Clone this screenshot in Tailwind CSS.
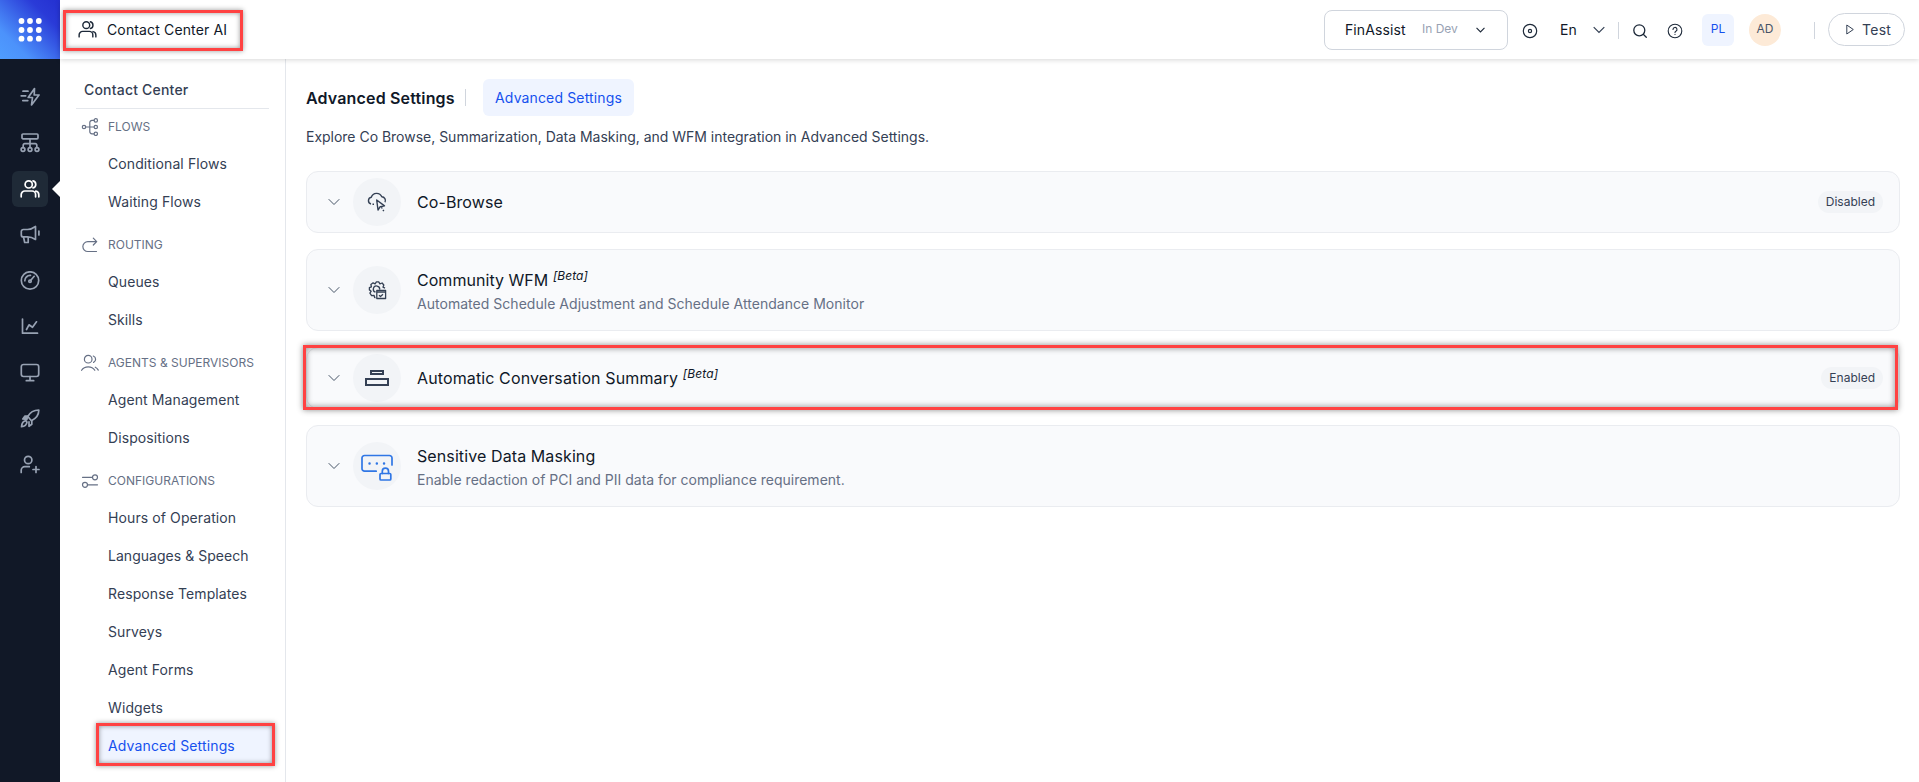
<!DOCTYPE html>
<html lang="en">
<head>
<meta charset="utf-8">
<title>Contact Center AI</title>
<script src="https://cdn.jsdelivr.net/npm/@tailwindcss/browser@4"></script>
</head>
<body class="relative h-[782px] w-[1919px] overflow-hidden bg-white font-['Inter',sans-serif] text-sm text-[#101828]">
<svg class="hidden">
  <symbol id="users" viewBox="0 0 20 20"><circle cx="8.7" cy="5.4" r="3.6"/><path d="M1.2 17.8v-2.2a3.6 3.6 0 0 1 3.6-3.6h7.2a3.6 3.6 0 0 1 3.6 3.6v2.2M13 1.9a3.6 3.6 0 0 1 0 7M15.8 12.2a3.6 3.6 0 0 1 3 3.5v2.1"/></symbol>
  <symbol id="down" viewBox="0 0 12 8"><path d="M.7 1.2 6 6.500l5.300-5.300"/></symbol>
</svg>
<div class="flex h-full">
  <aside class="flex w-[60px] shrink-0 flex-col bg-[#111827]">
    <div class="flex h-[59px] items-center justify-center bg-[linear-gradient(45deg,#4f9dff_0%,#4c92fb_25%,#2a3bd8_75%,#2430d0_100%)]">
      <svg class="size-6 fill-white" viewBox="0 0 24 24"><circle cx="3.5" cy="3" r="2.9"/><circle cx="12" cy="3" r="2.9"/><circle cx="20.8" cy="3" r="2.9"/><circle cx="3.5" cy="12" r="2.9"/><circle cx="12" cy="12" r="2.9"/><circle cx="20.8" cy="12" r="2.9"/><circle cx="3.5" cy="20.7" r="2.9"/><circle cx="12" cy="20.7" r="2.9"/><circle cx="20.8" cy="20.7" r="2.9"/></svg>
    </div>
    <nav class="mt-5 flex flex-col items-center gap-2.5 text-[#98a2b3] [&_svg]:size-5 [&_svg]:fill-none [&_svg]:stroke-current [&_svg]:stroke-[1.7] [&_svg]:[stroke-linecap:round] [&_svg]:[stroke-linejoin:round]">
      <a class="flex size-9 items-center justify-center"><svg viewBox="0 0 20 20"><path d="M14.500 1.500 8.200 10.500h4.300l-1 7.500 7.500-10h-4.800zM3 4.200h5M1.200 8.800h4.500M2.800 13.600h5"/></svg></a>
      <a class="flex size-9 items-center justify-center"><svg viewBox="0 0 20 20"><rect x="2" y="1" width="16" height="4.800" rx="1"/><path d="M10 5.800V14.500M3.200 14.500v-2.300a1.500 1.500 0 0 1 1.500-1.500h10.600a1.500 1.500 0 0 1 1.500 1.500V14.500"/><circle cx="3" cy="16.500" r="1.900"/><circle cx="10" cy="16.500" r="1.900"/><circle cx="17" cy="16.500" r="1.900"/></svg></a>
      <a class="relative flex size-9 items-center justify-center rounded-md bg-[#1f2a37] text-white"><svg><use href="#users"/></svg><i class="absolute -right-3 top-[10px] h-4 w-2 bg-white [clip-path:polygon(0_50%,100%_0,100%_100%)]"></i></a>
      <a class="flex size-9 items-center justify-center"><svg viewBox="0 0 20 20"><path d="M1.300 6.500a2 2 0 0 1 2-2h4.200c2.500 0 5.500-1.200 8-3v13c-2.500-1.600-5-2.600-8-2.600H3.300a2 2 0 0 1-2-2zM3.500 12l1.200 5.500h3.500V12M18.900 6v4"/></svg></a>
      <a class="flex size-9 items-center justify-center"><svg viewBox="0 0 20 20"><circle cx="10" cy="9.500" r="8.700"/><circle cx="10" cy="10.300" r="1.200"/><path d="m10.800 9.300 3.400-4M4.800 9.800A5.300 5.300 0 0 1 10.500 4.400M7 5.500l.1.100"/></svg></a>
      <a class="flex size-9 items-center justify-center"><svg viewBox="0 0 20 20"><path d="M2.500 2v14.200h15M6.500 12.500 9 7.800l3.500 2.500 4-5.500"/></svg></a>
      <a class="flex size-9 items-center justify-center"><svg viewBox="0 0 20 20"><rect x="1.300" y="1.500" width="17.400" height="12" rx="2.200"/><path d="M10 13.500v4M6.300 17.700h7.400"/></svg></a>
      <a class="flex size-9 items-center justify-center"><svg viewBox="0 0 20 20"><path d="M18.800 1c-5 0-8.500 1.800-11 6.500l3.600 4.200c4.700-2.200 7.400-5.700 7.400-10.700z"/><path class="fill-current" d="M7.800 7H5L2.800 10l4 .5z"/><path d="M11.800 11.700v3.600l-2.800 2v-4.500M6 11.700c-3 .5-4.200 2.500-4.500 6 3-.3 5-1.500 5.500-4.500z"/></svg></a>
      <a class="flex size-9 items-center justify-center"><svg viewBox="0 0 20 20"><circle cx="8.200" cy="5" r="3.700"/><path d="M1.200 17.500v-2.200a3.600 3.600 0 0 1 3.600-3.600h4.500M16 11.500v6M13 14.500h6"/></svg></a>
    </nav>
  </aside>

  <div class="flex flex-1 flex-col">
    <header class="z-10 flex h-[59px] shrink-0 items-center justify-between bg-white shadow-[0_1px_5px_rgba(0,0,0,0.16)]">
      <div class="ml-[3px] mt-[2px] flex h-[41px] w-[180px] items-center border-[3px] border-[#ff4242] pb-[2px] pl-3 shadow-[0_0_5px_rgba(0,0,0,0.4),inset_0_0_5px_rgba(0,0,0,0.4)]">
        <svg class="mr-[10px] size-[19px] fill-none stroke-[#1d2939] stroke-[1.500] [stroke-linecap:round]"><use href="#users"/></svg>
        <span class="tracking-[0.010em]">Contact Center AI</span>
      </div>
      <div class="flex items-center pr-[14px]">
        <div class="flex h-10 w-[184px] items-center rounded-lg border border-[#d0d5dd] pl-5">
          <span class="w-[77px] tracking-[0.1px]">FinAssist</span><span class="mb-[2px] w-[54px] text-xs text-[#98a2b3]">In Dev</span>
          <svg class="h-[6px] w-[9px] fill-none stroke-[#1d2939] stroke-[1.500]" viewBox="0 0 12 8"><path d="M.7 1.200 6 6.500l5.300-5.300"/></svg>
        </div>
        <svg class="ml-[14px] mt-[3px] size-4 fill-none stroke-[#1d2939] stroke-[1.200]" viewBox="0 0 16 16"><circle cx="8" cy="8" r="6.700"/><circle cx="8" cy="8" r="1.600"/></svg>
        <span class="ml-[22px] w-[33px]">En</span>
        <svg class="h-[8px] w-[12px] fill-none stroke-[#344054] stroke-[1.200]"><use href="#down"/></svg>
        <i class="ml-[13px] mt-px h-[17px] w-px bg-[#d0d5dd]"></i>
        <svg class="ml-[13px] mt-[3px] size-4 fill-none stroke-[#1d2939] stroke-[1.300] [stroke-linecap:round]" viewBox="0 0 16 16"><circle cx="7.300" cy="7.300" r="5.500"/><path d="m11.500 11.500 2.800 2.800"/></svg>
        <svg class="ml-[19px] mt-[3px] size-4 fill-none stroke-[#1d2939] stroke-[1.100] [stroke-linecap:round]" viewBox="0 0 16 16"><circle cx="8" cy="8" r="6.800"/><path d="M6 6.400a2 2 0 1 1 2.900 1.800c-.6.300-.9.600-.9 1.300M8 11.400v.1"/></svg>
        <span class="ml-[19px] flex size-8 items-center justify-center rounded-md bg-[#eff4ff] pb-px text-xs text-[#1550ee]">PL</span>
        <span class="ml-[15px] flex size-8 items-center justify-center rounded-full bg-[#fdead7] pb-px text-xs text-[#475467]">AD</span>
        <i class="ml-[33px] mt-px h-[17px] w-px bg-[#d0d5dd]"></i>
        <span class="ml-[13px] flex h-[33px] w-[77px] items-center rounded-full border border-[#d0d5dd] pl-[17px] text-[#344054]"><svg class="mr-2 h-[11px] w-[8px] fill-none stroke-current [stroke-linejoin:round]" viewBox="0 0 8 11"><path d="M.8 1v9l6.500-4.500z"/></svg><span class="pt-px tracking-[0.020em]">Test</span></span>
      </div>
    </header>

    <div class="flex flex-1">
      <aside class="flex w-[226px] shrink-0 flex-col border-r border-[#e4e7ec] tracking-[0.1px] text-[#344054] [&_svg]:size-[18px] [&_svg]:fill-none [&_svg]:stroke-[#667085] [&_svg]:stroke-[1.200] [&_svg]:[stroke-linecap:round] [&_svg]:[stroke-linejoin:round]">
        <h2 class="mx-4 flex h-[50px] items-center border-b border-[#e4e7ec] pl-2 pt-3 font-medium tracking-[0.2px]">Contact Center</h2>
        <div class="flex h-9 items-center gap-[9px] pl-[21px] text-xs tracking-normal text-[#667085]"><svg viewBox="0 0 18 18"><circle cx="3" cy="9" r="1.700"/><circle cx="14.800" cy="2.400" r="1.700"/><circle cx="14.800" cy="9" r="1.700"/><circle cx="14.800" cy="15.800" r="1.700"/><path d="M4.700 9h8.400M13 2.400h-2A2.200 2.200 0 0 0 8.800 4.600v9a2.200 2.200 0 0 0 2.200 2.200h2"/></svg>FLOWS</div>
        <div class="flex h-[38px] items-center pl-12">Conditional Flows</div>
        <div class="flex h-[38px] items-center pl-12">Waiting Flows</div>
        <div class="mt-1.5 flex h-9 items-center gap-[9px] pl-[21px] text-xs tracking-normal text-[#667085]"><svg viewBox="0 0 18 18"><path d="M15.500 15.500H6.800A4.800 4.800 0 0 1 6.800 5.600h8.700M12.300 2.200l3.400 3.400-3.400 3.400"/></svg>ROUTING</div>
        <div class="flex h-[38px] items-center pl-12">Queues</div>
        <div class="flex h-[38px] items-center pl-12">Skills</div>
        <div class="mt-1.5 flex h-9 items-center gap-[9px] pl-[21px] text-xs tracking-normal text-[#667085]"><svg viewBox="0 0 18 18"><circle cx="7.200" cy="5.200" r="3.800"/><path d="M.6 16.300c1.700-2.700 4-3.500 6.600-3.500s5 .8 6.600 3.500M12.300 2c1.500.6 2.300 1.700 2.300 3.200s-.8 2.600-2 3.200M14.300 13.200c1.200.5 2.200 1.500 3 2.900"/></svg>AGENTS &amp; SUPERVISORS</div>
        <div class="flex h-[38px] items-center pl-12">Agent Management</div>
        <div class="flex h-[38px] items-center pl-12">Dispositions</div>
        <div class="mt-1.5 flex h-9 items-center gap-[9px] pl-[21px] text-xs tracking-normal text-[#667085]"><svg viewBox="0 0 18 18"><circle cx="14" cy="5.300" r="2.500"/><circle cx="4" cy="12.800" r="2.500"/><path d="M1.500 5.300h10M6.500 12.800h10"/></svg>CONFIGURATIONS</div>
        <div class="flex h-[38px] items-center pl-12">Hours of Operation</div>
        <div class="flex h-[38px] items-center pl-12 tracking-[0.03px]">Languages &amp; Speech</div>
        <div class="flex h-[38px] items-center pl-12">Response Templates</div>
        <div class="flex h-[38px] items-center pl-12">Surveys</div>
        <div class="flex h-[38px] items-center pl-12">Agent Forms</div>
        <div class="flex h-[38px] items-center pl-12">Widgets</div>
        <div class="-mt-[4px] ml-9 flex h-[43px] w-[179px] items-center border-[3px] border-[#ff4242] bg-[#eff4ff] pl-[9px] pt-[2px] tracking-[0.14px] text-[#1550ee] shadow-[0_0_5px_rgba(0,0,0,0.4),inset_0_0_5px_rgba(0,0,0,0.4)]">Advanced Settings</div>
      </aside>

      <main class="flex-1 pl-5 pr-[19px] pt-5">
        <div class="flex h-[37px] items-center">
          <h1 class="w-[159px] whitespace-nowrap text-base font-semibold tracking-[0.010em]">Advanced Settings</h1>
          <i class="h-[17px] w-px bg-[#d0d5dd]"></i>
          <span class="ml-[17px] flex h-[37px] w-[151px] items-center justify-center rounded-md bg-[#eff4ff] pt-px tracking-[0.14px] text-[#1550ee]">Advanced Settings</span>
        </div>
        <p class="mt-[11px] tracking-[-0.015px] text-[#344054]">Explore Co Browse, Summarization, Data Masking, and WFM integration in Advanced Settings.</p>
        <div class="mt-6 flex flex-col gap-4">
          <section class="flex h-[62px] items-center rounded-xl border border-[#eaecf0] bg-[#f9fafc] pl-[21px] pr-4">
            <svg class="h-2 w-3 fill-none stroke-[#475467] stroke-1"><use href="#down"/></svg>
            <span class="ml-[13px] flex size-12 items-center justify-center rounded-full bg-[#f2f4f7]"><svg class="size-5 fill-none stroke-[#344054] stroke-[1.400] [stroke-linejoin:round]" viewBox="0 0 20 20"><path d="M7 12.200H5.500M4 12a3.500 3.500 0 0 1 .3-6.800A5.600 5.600 0 0 1 14.800 4.800 3.700 3.700 0 0 1 18 10.200M9.700 8l1.300 10 2.200-3.300 4.300-.8zM14.500 15.300l.7 1.200M16 17.800l.8 1.400"/></svg></span>
            <h3 class="ml-4 flex-1 text-base tracking-[0.1px]">Co-Browse</h3>
            <span class="rounded-full bg-[#f2f4f7] px-2 py-[3px] text-xs text-[#344054]">Disabled</span>
          </section>
          <section class="flex h-[82px] items-center rounded-xl border border-[#eaecf0] bg-[#f9fafc] pl-[21px] pr-4">
            <svg class="h-2 w-3 fill-none stroke-[#475467] stroke-1"><use href="#down"/></svg>
            <span class="ml-[13px] flex size-12 items-center justify-center rounded-full bg-[#f2f4f7]"><svg class="mr-px size-5 fill-none stroke-[#344054] stroke-[1.300] [stroke-linejoin:round]" viewBox="0 0 20 20"><path d="M8.500 17.500H7.700l-.7-2.200-2.400.3-1.700-2.400 1.300-2-1.800-1.300V7.600l2-.8-.5-2.300 2.200-1.700 2 1 1.300-2h2.300l1.200 2 2.200-.8 1.700 2-.8 2.200 2 1"/><path d="M8.500 12.200A3.200 3.200 0 1 1 12.700 9.500M9.800 10.500h8.800v8H9.800zM9.800 12.200h8.800M12 15.300l1.500 1.300 2.500-2.300"/></svg></span>
            <div class="ml-4 flex-1 pt-[2px]"><h3 class="text-base leading-6 tracking-[0.04px]">Community WFM <sup class="-top-[6px] text-xs italic">[Beta]</sup></h3><p class="mt-px leading-[22px] tracking-[0.03px] text-[#667085]">Automated Schedule Adjustment and Schedule Attendance Monitor</p></div>
          </section>
          <section class="relative flex h-[62px] items-center rounded-xl border border-[#eaecf0] bg-[#f9fafc] pl-[21px] pr-4">
            <svg class="h-2 w-3 fill-none stroke-[#475467] stroke-1"><use href="#down"/></svg>
            <span class="ml-[13px] flex size-12 items-center justify-center rounded-full bg-[#f2f4f7]"><svg class="h-4 w-6 fill-none stroke-[#344054] stroke-2" viewBox="0 0 24 16"><path d="M6 1h12v3H6zM1 9h22v6H1z"/></svg></span>
            <h3 class="ml-4 flex-1 text-base tracking-[0.12px]">Automatic Conversation Summary <sup class="-top-[6px] text-xs italic">[Beta]</sup></h3>
            <span class="rounded-full bg-[#f2f4f7] px-2 py-[3px] text-xs text-[#344054]">Enabled</span>
            <i class="absolute -left-1 -top-[3px] h-[65px] w-[1595px] border-[3px] border-[#ff4242] shadow-[0_0_6px_rgba(0,0,0,0.45),inset_0_0_6px_rgba(0,0,0,0.45)]"></i>
          </section>
          <section class="flex h-[82px] items-center rounded-xl border border-[#eaecf0] bg-[#f9fafc] pl-[21px] pr-4">
            <svg class="h-2 w-3 fill-none stroke-[#475467] stroke-1"><use href="#down"/></svg>
            <span class="ml-[13px] flex size-12 items-center justify-center rounded-full bg-[#f2f4f7]"><svg class="mr-px mt-[2px] h-[27px] w-8 fill-none stroke-[#2f76e5] stroke-[1.700] [stroke-linecap:round] [stroke-linejoin:round]" viewBox="0 0 32 27"><path d="M15.200 17.200H3.500a2.500 2.500 0 0 1-2.500-2.500V4a2.500 2.500 0 0 1 2.500-2.500h25A2.500 2.500 0 0 1 31 4v7"/><path class="stroke-[2.4]" d="M8.500 9.500h.1M15.800 9.500h.1M23 9.500h.1"/><rect x="19" y="19.500" width="10.800" height="6.500" rx="1"/><path d="M21.300 19.500v-2.300a3.100 3.100 0 0 1 6.200 0v2.300"/></svg></span>
            <div class="ml-4 flex-1 pt-[2px]"><h3 class="text-base leading-6 tracking-[0.1px]">Sensitive Data Masking</h3><p class="mt-px leading-[22px] text-[#667085]">Enable redaction of PCI and PII data for compliance requirement.</p></div>
          </section>
        </div>
      </main>
    </div>
  </div>
</div>
</body>
</html>
